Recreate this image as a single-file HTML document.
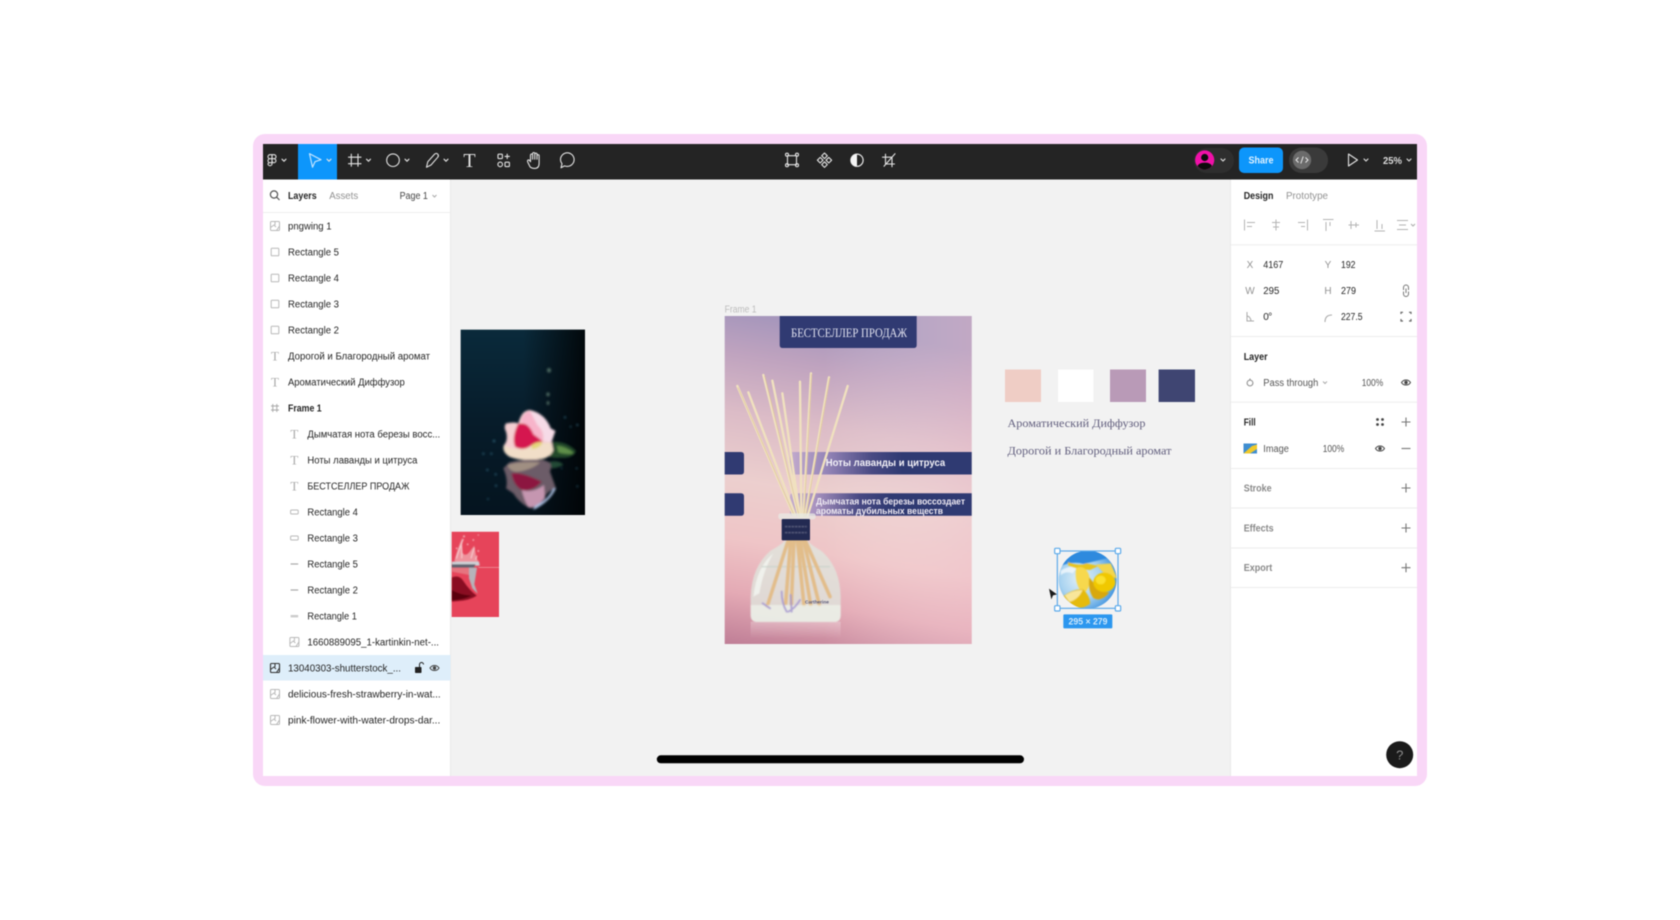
<!DOCTYPE html>
<html><head><meta charset="utf-8"><title>Figma</title>
<style>
html,body{margin:0;padding:0;background:#fff;width:1680px;height:920px;overflow:hidden}
svg{display:block;filter:blur(.55px)}
text{font-family:"Liberation Sans","Noto Sans CJK SC",sans-serif;font-size:10px;fill:#262626;white-space:pre}
.b{font-weight:bold}
text.g{fill:#929292}
.s{font-family:"Liberation Serif","Noto Serif CJK SC",serif}
.ic{fill:none;stroke:#b9b9b9;stroke-width:1}
.tb{fill:none;stroke:#e2e2e2;stroke-width:1.1;stroke-linejoin:round;stroke-linecap:round}
.li{fill:none;stroke:#aaa;stroke-width:1}
</style></head><body>
<svg xmlns="http://www.w3.org/2000/svg" width="1680" height="920" viewBox="0 0 1680 920">
<defs>
<filter id="bl3" x="-20%" y="-20%" width="140%" height="140%"><feGaussianBlur stdDeviation="3"/></filter>
<filter id="bl2" x="-20%" y="-20%" width="140%" height="140%"><feGaussianBlur stdDeviation="1.8"/></filter>
<linearGradient id="fg" x1=".12" y1="0" x2=".0" y2="1">
<stop offset="0" stop-color="#a797bc"/><stop offset=".12" stop-color="#bfa3bf"/><stop offset=".3" stop-color="#dcbcc7"/><stop offset=".5" stop-color="#eccfce"/><stop offset=".68" stop-color="#efc5c7"/><stop offset=".84" stop-color="#e4aab5"/><stop offset="1" stop-color="#bf7e96"/>
</linearGradient>
<linearGradient id="fr" x1="0" y1="0" x2="1" y2="0"><stop offset=".4" stop-color="#fff" stop-opacity="0"/><stop offset="1" stop-color="#f3c9d4" stop-opacity=".35"/></linearGradient>
<linearGradient id="b1" x1="0" y1="0" x2="1" y2="0"><stop offset="0" stop-color="#c3abcd"/><stop offset=".2" stop-color="#9585b8"/><stop offset=".45" stop-color="#494a83"/><stop offset=".62" stop-color="#2f3a72"/><stop offset="1" stop-color="#2f3a72"/></linearGradient>
<linearGradient id="b2" x1="0" y1="0" x2="1" y2="0"><stop offset="0" stop-color="#c3abcd"/><stop offset=".14" stop-color="#a892bf"/><stop offset=".38" stop-color="#484983"/><stop offset=".55" stop-color="#2f3a72"/><stop offset="1" stop-color="#2f3a72"/></linearGradient>
<linearGradient id="refl" x1="0" y1="0" x2="0" y2="1"><stop offset="0" stop-color="#fff" stop-opacity=".28"/><stop offset="1" stop-color="#fff" stop-opacity="0"/></linearGradient>
<linearGradient id="fb" x1="0" y1="0" x2="0" y2="1"><stop offset="0" stop-color="#0a2a3b"/><stop offset=".5" stop-color="#071c2a"/><stop offset="1" stop-color="#05141f"/></linearGradient>
<linearGradient id="fr2" x1="0" y1="0" x2="1" y2="0"><stop offset="0" stop-color="#000" stop-opacity="0"/><stop offset=".5" stop-color="#000" stop-opacity="0"/><stop offset="1" stop-color="#000" stop-opacity=".8"/></linearGradient>
<radialGradient id="lb" cx=".38" cy=".48" r=".7"><stop offset="0" stop-color="#e4f1f8"/><stop offset=".5" stop-color="#a9d3f0"/><stop offset="1" stop-color="#2a86dc"/></radialGradient>
<clipPath id="lc"><circle cx="143" cy="119" r="87"/></clipPath>
<clipPath id="sc"><rect x="20" y="20" width="142" height="256"/></clipPath>
<clipPath id="fc"><rect x="32" y="14" width="373" height="556"/></clipPath>
<g id="iimg"><rect x="-4.5" y="-4.5" width="9" height="9" rx="1" class="ic"/><path d="M-4.5 1.5 L-1 -1 L1 1 M0 -4.5 V-1 M4.5 0 L1.5 4.5" class="ic"/></g>
<g id="irect"><rect x="-3.8" y="-3.8" width="7.6" height="7.6" rx=".8" class="ic"/></g>
<g id="ibar"><rect x="-3.8" y="-2" width="7.6" height="4" rx="1" class="ic"/></g>
<g id="iline"><path d="M-3.8 0 H3.8" stroke="#aaa" stroke-width="1.2" fill="none"/></g>
<g id="ieye"><path d="M-4.5 0 C-2.5 -3.4 2.5 -3.4 4.5 0 C2.5 3.4 -2.5 3.4 -4.5 0Z" fill="none" stroke="#444" stroke-width="1"/><circle r="1.7" fill="#444"/></g>
<g id="iplus"><path d="M-4.5 0 H4.5 M0 -4.5 V4.5" stroke="#777" stroke-width="1.1" fill="none"/></g>
<g id="chev"><path d="M-2 -1 L0 1 L2 -1" fill="none" stroke="#e2e2e2" stroke-width="1.1" stroke-linecap="round"/></g>
</defs>

<!-- outer -->
<rect x="253" y="134" width="1174" height="652" rx="12" fill="#f9d7f7"/>
<rect x="263" y="144" width="1154" height="632" fill="#f2f2f2"/>

<!-- toolbar -->
<rect x="263" y="144" width="1154" height="35.5" fill="#242424"/>
<rect x="298" y="144" width="39" height="35.5" fill="#0d96fb"/>
<g transform="translate(0,-.8)">
<g class="tb" transform="translate(272.5,161)"><path d="M-.5 -5.5 H-2.5 A2 2 0 0 0 -2.5 -1.5 H-.5Z M-.5 -5.5 H1.5 A2 2 0 0 1 1.5 -1.5 H-.5 M-.5 -1.5 H-2.5 A2 2 0 0 0 -2.5 2.5 H-.5Z M-.5 2.5 V3.5 A2 2 0 0 1 -4.5 3.5 A2 2 0 0 1 -2.5 2.5 M-.5 -1.5 H1.4 A2 2 0 1 1 1.4 2.5 A2 2 0 0 1 -.5 .5"/></g>
<use href="#chev" x="284" y="161"/>
<path d="M309.5 154.5 L321 160.5 L315 162.5 L312.5 168 Z" fill="none" stroke="#bfe3ff" stroke-width="1.2" stroke-linejoin="round"/>
<use href="#chev" x="329" y="161"/>
<path class="tb" d="M351.3 155 V167 M358 155 V167 M348.5 158 H361 M348.5 164.5 H361"/>
<use href="#chev" x="368.5" y="161"/>
<circle class="tb" cx="393" cy="161" r="6.3"/>
<use href="#chev" x="407" y="161"/>
<path class="tb" d="M426.5 168 L427.8 162.5 L434.5 155 Q436.5 153.5 437.8 155 Q439 156.5 437.8 158 L431 165.8 Z"/>
<use href="#chev" x="446" y="161"/>
<text x="469.5" y="168" class="s" text-anchor="middle" style="font-size:20px;fill:#e2e2e2">T</text>
<g class="tb"><rect x="498" y="155" width="4.4" height="4.4" rx=".8"/><rect x="505" y="163" width="4.4" height="4.4" rx=".8"/><circle cx="500.2" cy="165.2" r="2.3"/><path d="M507.2 155 V159.4 M505 157.2 H509.4"/></g>
<path class="tb" d="M530 167.5 L527.8 163 Q527 161.2 528.3 160.7 Q529.6 160.7 530.5 162.5 V156 Q530.5 154.8 531.6 154.8 Q532.6 154.8 532.6 156 V160 V154.5 Q532.6 153.3 533.7 153.3 Q534.8 153.3 534.8 154.5 V160 V155 Q534.8 154 535.9 154 Q537 154 537 155 V160 V156.5 Q537 155.5 538 155.5 Q539.1 155.5 539.1 156.5 V164 Q539.1 169.2 534.6 169.2 Q531.6 169.2 530 167.5Z"/>
<path class="tb" d="M561 168.5 L562 164.5 Q560.5 162.5 560.5 160.5 A6.8 6.8 0 1 1 567.3 167.2 Q565.5 167.2 564.5 166.7 Z"/>
<g class="tb"><path d="M787.5 156.5 H796.5 M787.5 165.5 H796.5 M787.5 157 V165 M796.5 157 V165"/><circle cx="787" cy="155.5" r="1.5"/><circle cx="797" cy="155.5" r="1.5"/><circle cx="787" cy="166" r="1.5"/><circle cx="797" cy="166" r="1.5"/></g>
<g class="tb"><path d="M824.5 153.8 L827.3 156.6 L824.5 159.4 L821.7 156.6Z M824.5 162.6 L827.3 165.4 L824.5 168.2 L821.7 165.4Z M820.2 158.2 L823 161 L820.2 163.8 L817.4 161Z M828.8 158.2 L831.6 161 L828.8 163.8 L826 161Z"/></g>
<circle cx="857" cy="161" r="6.1" fill="none" stroke="#e8e8e8" stroke-width="1.2"/><path d="M857 154.9 A6.1 6.1 0 0 0 857 167.1Z" fill="#f4f4f4"/>
<path class="tb" d="M885.5 155 V164.8 H894.5 M882.5 158 H892 V167.5 M895 154.5 L884 167"/>
</g>

<!-- right toolbar -->
<rect x="1194" y="148" width="40" height="25" rx="12.5" fill="#2e2e2e"/>
<circle cx="1204.7" cy="160" r="9.6" fill="#f010a8"/>
<path d="M1197.5 166 Q1199 162.6 1204.7 162.6 Q1210.4 162.6 1212 166 Q1209 169.6 1204.7 169.6 Q1200.4 169.6 1197.5 166Z" fill="#0b0b0b"/><circle cx="1204.7" cy="157.5" r="3.6" fill="#0b0b0b"/>
<use href="#chev" x="1223" y="160"/>
<rect x="1239" y="147.5" width="44" height="25.5" rx="5" fill="#0d96fb"/>
<text x="1261" y="163.5" text-anchor="middle" class="b" style="fill:#dff1ff" textLength="25" lengthAdjust="spacingAndGlyphs">Share</text>
<rect x="1289" y="147.5" width="39" height="25.5" rx="12.5" fill="#3a3a3a"/>
<circle cx="1302" cy="160" r="9.2" fill="#6b6b6b"/>
<path d="M1298.5 157.5 L1296 160 L1298.5 162.5 M1305.5 157.5 L1308 160 L1305.5 162.5 M1303.2 156.5 L1300.8 163.5" fill="none" stroke="#e8e8e8" stroke-width="1"/>
<path class="tb" d="M1348.5 154 L1357.5 160 L1348.5 166 Z"/>
<use href="#chev" x="1366" y="160"/>
<text x="1383" y="164" class="b" style="fill:#dcdcdc" textLength="19" lengthAdjust="spacingAndGlyphs">25%</text>
<use href="#chev" x="1409" y="160"/>

<!-- left panel -->
<rect x="263" y="179.5" width="187.5" height="596.5" fill="#fff"/>
<rect x="450" y="179.5" width="1" height="596.5" fill="#e9e9e9"/>
<rect x="263" y="212" width="187.5" height="1" fill="#eeeeee"/>
<circle cx="274" cy="194.5" r="3.6" fill="none" stroke="#555" stroke-width="1.2"/><path d="M276.7 197.2 L279.5 200" stroke="#555" stroke-width="1.2"/>
<text x="288" y="199" class="b" textLength="28.7" lengthAdjust="spacingAndGlyphs">Layers</text>
<text x="329.2" y="199" class="g" textLength="29" lengthAdjust="spacingAndGlyphs">Assets</text>
<text x="399.6" y="199" style="fill:#444" textLength="28.3" lengthAdjust="spacingAndGlyphs">Page 1</text>
<path d="M432.5 195 L434.5 197 L436.5 195" fill="none" stroke="#aaa"/>

<rect x="263" y="655" width="187.5" height="25.5" fill="#deeefa"/>

<use href="#iimg" x="275" y="226"/><text x="288" y="229.3" textLength="43.6" lengthAdjust="spacingAndGlyphs">pngwing 1</text>
<use href="#irect" x="275" y="252"/><text x="288" y="255.3" textLength="51" lengthAdjust="spacingAndGlyphs">Rectangle 5</text>
<use href="#irect" x="275" y="278"/><text x="288" y="281.3" textLength="51" lengthAdjust="spacingAndGlyphs">Rectangle 4</text>
<use href="#irect" x="275" y="304"/><text x="288" y="307.3" textLength="51" lengthAdjust="spacingAndGlyphs">Rectangle 3</text>
<use href="#irect" x="275" y="330"/><text x="288" y="333.3" textLength="51" lengthAdjust="spacingAndGlyphs">Rectangle 2</text>
<text x="275" y="360.5" class="s" text-anchor="middle" style="font-size:13px;fill:#aaa">T</text><text x="288" y="359.3" textLength="142" lengthAdjust="spacingAndGlyphs">Дорогой и Благородный аромат</text>
<text x="275" y="386.5" class="s" text-anchor="middle" style="font-size:13px;fill:#aaa">T</text><text x="288" y="385.3" textLength="116.7" lengthAdjust="spacingAndGlyphs">Ароматический Диффузор</text>
<path class="li" d="M272.8 404 V412 M276.8 404 V412 M271 406 H279 M271 410 H279"/><text x="288" y="411.3" class="b" textLength="33.7" lengthAdjust="spacingAndGlyphs">Frame 1</text>

<text x="294.4" y="438.5" class="s" text-anchor="middle" style="font-size:13px;fill:#aaa">T</text><text x="307.4" y="437.3" textLength="132.8" lengthAdjust="spacingAndGlyphs">Дымчатая нота березы восс...</text>
<text x="294.4" y="464.5" class="s" text-anchor="middle" style="font-size:13px;fill:#aaa">T</text><text x="307.4" y="463.3" textLength="110" lengthAdjust="spacingAndGlyphs">Ноты лаванды и цитруса</text>
<text x="294.4" y="490.5" class="s" text-anchor="middle" style="font-size:13px;fill:#aaa">T</text><text x="307.4" y="489.3" textLength="102" lengthAdjust="spacingAndGlyphs">БЕСТСЕЛЛЕР ПРОДАЖ</text>
<use href="#ibar" x="294.4" y="512"/><text x="307.4" y="515.3" textLength="50.5" lengthAdjust="spacingAndGlyphs">Rectangle 4</text>
<use href="#ibar" x="294.4" y="538"/><text x="307.4" y="541.3" textLength="50.5" lengthAdjust="spacingAndGlyphs">Rectangle 3</text>
<use href="#iline" x="294.4" y="564"/><text x="307.4" y="567.3" textLength="50.5" lengthAdjust="spacingAndGlyphs">Rectangle 5</text>
<use href="#iline" x="294.4" y="590"/><text x="307.4" y="593.3" textLength="50.5" lengthAdjust="spacingAndGlyphs">Rectangle 2</text>
<rect x="290.6" y="615" width="7.6" height="2.4" fill="#ccc"/><text x="307.4" y="619.3" textLength="49.5" lengthAdjust="spacingAndGlyphs">Rectangle 1</text>
<use href="#iimg" x="294.4" y="642"/><text x="307.4" y="645.3" textLength="131.6" lengthAdjust="spacingAndGlyphs">1660889095_1-kartinkin-net-...</text>
<g transform="translate(275,668)"><rect x="-4.5" y="-4.5" width="9" height="9" rx="1" fill="none" stroke="#333" stroke-width="1.1"/><path d="M-4.5 1.5 L-1 -1 L1 1 M0 -4.5 V-1 M4.5 0 L1.5 4.5" fill="none" stroke="#333" stroke-width="1"/></g>
<text x="288" y="671.3" textLength="113" lengthAdjust="spacingAndGlyphs">13040303-shutterstock_...</text>
<rect x="415" y="667" width="6.5" height="6" rx=".7" fill="#222"/><path d="M419.5 667 V664.5 A2 2 0 0 1 423.5 664.5" fill="none" stroke="#222" stroke-width="1"/>
<use href="#ieye" x="434.5" y="668"/>
<use href="#iimg" x="275" y="694"/><text x="288" y="697.3" textLength="152.7" lengthAdjust="spacingAndGlyphs">delicious-fresh-strawberry-in-wat...</text>
<use href="#iimg" x="275" y="720"/><text x="288" y="723.3" textLength="152.3" lengthAdjust="spacingAndGlyphs">pink-flower-with-water-drops-dar...</text>

<!-- flower image: zoom coords origin 450,325 x3 -->
<g transform="translate(450,325) scale(.33333)">
<rect x="32" y="14" width="373" height="556" fill="url(#fb)"/>
<rect x="32" y="14" width="373" height="556" fill="url(#fr2)"/>
<g clip-path="url(#fc)">
<g filter="url(#bl3)">
<g fill="#3f7d96" opacity=".85"><circle cx="100" cy="386" r="3"/><circle cx="124" cy="386" r="3"/><circle cx="132" cy="348" r="3.5"/><circle cx="112" cy="435" r="3"/><circle cx="137" cy="448" r="3"/><circle cx="138" cy="482" r="3"/><circle cx="114" cy="522" r="2.5"/><circle cx="345" cy="277" r="3"/><circle cx="382" cy="300" r="3"/><circle cx="362" cy="305" r="2.5"/><circle cx="380" cy="430" r="2.5"/><circle cx="382" cy="484" r="2.5"/><circle cx="335" cy="430" r="2"/></g>
<g fill="#5f7f72" opacity=".8"><ellipse cx="297" cy="136" rx="6" ry="7"/><ellipse cx="294" cy="208" rx="5" ry="6"/><ellipse cx="294" cy="234" rx="4" ry="6"/></g>
<path d="M300 352 Q345 345 378 378 Q370 400 335 398 Q310 400 298 395Z" fill="#22482a"/>
<path d="M320 362 Q350 365 372 385 Q350 390 325 382Z" fill="#5f8f48"/>
<path d="M168 295 Q195 290 205 295 Q215 255 240 255 Q285 265 302 310 L316 318 L305 350 L310 375 Q300 400 270 402 Q215 410 178 395 Q155 380 162 360 Q175 345 168 320 Q160 305 168 295Z" fill="#f4cfd2"/>
<path d="M205 296 Q235 290 250 325 L278 350 Q260 350 245 360 Q220 380 195 365 Q185 335 205 296Z" fill="#d5164f"/>
<path d="M212 290 Q220 262 240 258 L262 300 Q282 320 278 348 L250 328 Q238 298 212 290Z" fill="#f7b4ca"/>
<path d="M240 258 Q285 265 302 310 L316 318 L305 350 Q290 352 280 345 Q285 320 262 300Z" fill="#f6dbe7"/>
<path d="M162 360 Q190 378 230 370 Q260 355 300 352 L310 375 Q300 400 270 402 Q215 410 178 395 Q155 380 162 360Z" fill="#f1dec8"/>
<path d="M245 360 Q262 348 278 352 Q270 370 245 372Z" fill="#e4d67a"/>
<path d="M178 412 Q215 402 275 404 Q302 410 305 420 L300 440 L318 490 Q290 498 280 525 Q255 556 235 548 Q205 530 190 505 L168 490 Q175 465 160 430 Z" fill="#6c5c68"/>
<path d="M172 420 Q205 408 270 412 Q250 432 205 440 Q180 442 172 420Z" fill="#a08f82"/>
<path d="M185 445 Q215 440 275 470 Q250 500 215 495 Q190 480 185 445Z" fill="#8c1240"/>
<path d="M255 540 Q290 530 310 490 L318 490 Q300 530 250 555Z" fill="#a9bee0"/>
<path d="M215 495 Q250 505 282 480 L285 520 Q255 550 235 546 Q222 525 215 495Z" fill="#c596b0"/>
<path d="M300 410 Q330 405 340 420 Q320 430 305 430Z" fill="#234a35"/>
</g></g>
</g>

<!-- strawberry image: origin 445,525 x3 -->
<g transform="translate(445,525) scale(.33333)" clip-path="url(#sc)">
<rect x="17" y="20" width="145" height="256" fill="#e6445a"/>
<rect x="100" y="126" width="62" height="2.5" fill="#ef8c96"/>
<g filter="url(#bl2)">
<path d="M28 108 Q38 70 52 38 L52 82 Q62 100 80 72 L88 62 L94 98 L102 112 H40Z" fill="#f0a8ae" opacity=".8"/>
<g stroke="#f9d8da" stroke-width="3" fill="none" opacity=".9"><path d="M34 100 Q42 72 55 42"/><path d="M50 100 Q52 80 48 60"/><path d="M78 100 Q82 84 88 68"/><path d="M92 104 L96 92"/></g>
<g fill="#f8cfd2" opacity=".85"><circle cx="57" cy="34" r="3"/><circle cx="85" cy="45" r="2.5"/><circle cx="100" cy="30" r="2"/><circle cx="35" cy="70" r="2.5"/><circle cx="100" cy="78" r="2.5"/><circle cx="68" cy="58" r="2.5"/></g>
<path d="M20 110 H102 L104 122 H20Z" fill="#cfd1d6"/>
<path d="M20 118 H92 L86 128 H20Z" fill="#5c606d"/>
<path d="M72 128 H96 L88 178 L98 206 L82 190 L72 160Z" fill="#b6b3ba"/>
<path d="M20 128 H72 L72 150 L20 140Z" fill="#e5878f" opacity=".7"/>
<path d="M20 158 Q42 148 55 168 Q75 198 95 212 Q75 226 40 228 L20 230Z" fill="#8a0e22"/>
<path d="M20 195 Q45 210 80 212 Q55 224 20 226Z" fill="#5a0611"/>
</g>
</g>

<!-- frame -->
<text x="724.6" y="312.5" style="fill:#bdbdbd" textLength="32" lengthAdjust="spacingAndGlyphs">Frame 1</text>
<rect x="724.7" y="316" width="247" height="328" fill="url(#fg)"/>
<rect x="724.7" y="316" width="247" height="328" fill="url(#fr)"/>
<path d="M779.7 316 H916.7 V345 Q916.7 348 913.7 348 H782.7 Q779.7 348 779.7 345Z" fill="#303a72"/>
<text x="791" y="337" class="s" style="font-size:13px;fill:#dfe0ee" textLength="116" lengthAdjust="spacingAndGlyphs">БЕСТСЕЛЛЕР ПРОДАЖ</text>
<path d="M724.7 452 H741 Q744 452 744 455 V471.5 Q744 474.5 741 474.5 H724.7Z" fill="#303a72"/>
<path d="M724.7 493.3 H741 Q744 493.3 744 496.3 V512.8 Q744 515.8 741 515.8 H724.7Z" fill="#303a72"/>
<path d="M793 452 H971.7 V474.5 H793 Q790 474.5 790 471.5 V455 Q790 452 793 452Z" fill="url(#b1)"/>
<path d="M793 493.3 H971.7 V515.8 H793 Q790 515.8 790 512.8 V496.3 Q790 493.3 793 493.3Z" fill="url(#b2)"/>
<text x="825.7" y="466" class="b" style="font-size:10.5px;fill:#f3f1f7" textLength="119.5" lengthAdjust="spacingAndGlyphs">Ноты лаванды и цитруса</text>
<text x="816" y="504.3" class="b" style="font-size:9.5px;fill:#efeaf3" textLength="149" lengthAdjust="spacingAndGlyphs">Дымчатая нота березы воссоздает</text>
<text x="816" y="514" class="b" style="font-size:9.5px;fill:#efeaf3" textLength="127" lengthAdjust="spacingAndGlyphs">ароматы дубильных веществ</text>

<!-- diffuser: origin 720,310 x3 -->
<g transform="translate(720,310) scale(.33333)">
<rect x="92" y="935" width="270" height="50" fill="url(#refl)"/>
<g filter="url(#bl2)">
<path d="M195 690 Q188 702 152 722 Q95 770 92 860 L92 915 Q92 935 110 936 H345 Q362 935 362 915 L362 860 Q360 770 303 722 Q268 702 262 690Z" fill="#dfe7de" opacity=".78"/>
<path d="M100 860 Q110 770 160 730 Q130 780 118 850 Z" fill="#f4f8f4" opacity=".75"/>
<path d="M125 770 H330" stroke="#c4d0c8" stroke-width="4" opacity=".7"/>
<g stroke="#e2bd8a" stroke-width="11" stroke-linecap="round" fill="none">
<path d="M205 690 L142 888"/><path d="M212 690 L197 880"/><path d="M222 690 L214 885"/><path d="M232 690 L252 885"/><path d="M240 690 L272 885"/><path d="M250 690 L298 885"/><path d="M255 690 L330 860"/>
</g>
<path d="M92 885 L92 915 Q92 935 110 936 H345 Q362 935 362 915 L362 885Z" fill="#eef2ea" opacity=".72"/>
<g stroke="#a394cf" stroke-width="6" fill="none" stroke-linecap="round" opacity=".8"><path d="M185 845 Q185 880 200 905"/><path d="M212 855 L215 905"/><path d="M128 880 L150 895"/><path d="M240 870 Q225 895 205 905"/></g>
</g>
<g stroke="#f0e1bf" stroke-width="7" stroke-linecap="round" fill="none">
<path d="M52 228 L220 615"/><path d="M85 247 L226 615"/><path d="M130 195 L236 620"/><path d="M157 212 L240 620"/><path d="M187 250 L240 620"/><path d="M240 215 L244 620"/><path d="M273 190 L250 620"/><path d="M327 202 L255 620"/><path d="M383 228 L262 620"/>
</g>
<g stroke="#d8bc8b" stroke-width="2" fill="none" opacity=".75"><path d="M54 232 L222 615"/><path d="M134 197 L238 620"/><path d="M275 192 L252 620"/><path d="M329 204 L257 620"/></g>
<rect x="175" y="610" width="112" height="18" rx="7" fill="#e8e9e4" opacity=".75"/>
<rect x="185" y="627" width="85" height="64" rx="3" fill="#232a52"/>
<g stroke="#7f8098" stroke-width="3" stroke-dasharray="7 3" filter="url(#bl2)"><path d="M195 650 H260"/><path d="M195 668 H260"/></g>
<text x="255" y="880" style="font-size:15px;fill:#59597a" class="b" textLength="72" lengthAdjust="spacingAndGlyphs">Cartherine</text>
</g>

<!-- swatches -->
<rect x="1005" y="369.5" width="36" height="32.5" fill="#efcdc5"/>
<rect x="1058" y="369.5" width="35.5" height="32.5" fill="#fff"/>
<rect x="1110" y="369.5" width="36" height="32.5" fill="#b99ab7"/>
<rect x="1158.6" y="369.5" width="36.4" height="32.5" fill="#3f4572"/>
<text x="1007.5" y="427" class="s" style="font-size:12px;fill:#63607f" textLength="138" lengthAdjust="spacingAndGlyphs">Ароматический Диффузор</text>
<text x="1007.5" y="454.5" class="s" style="font-size:12px;fill:#63607f" textLength="164" lengthAdjust="spacingAndGlyphs">Дорогой и Благородный аромат</text>

<!-- lemon: origin 1040,540 x3 -->
<g transform="translate(1040,540) scale(.33333)">
<circle cx="143" cy="119" r="87" fill="url(#lb)"/>
<g clip-path="url(#lc)"><g filter="url(#bl2)">
<path d="M55 80 Q100 62 130 72 L230 48 V25 H50Z" fill="#2d8ade"/>
<path d="M62 92 Q90 75 112 82 L98 100 Q78 92 62 106Z" fill="#f4f9fc" opacity=".8"/>
<path d="M84 66 Q115 80 140 70 L175 78 L150 90 Q110 88 84 76Z" fill="#e8c41c"/>
<path d="M108 84 Q135 74 147 105 Q156 140 130 162 Q102 135 108 84Z" fill="#f7d84e"/>
<path d="M168 74 L212 70 L232 116 Q212 110 192 100Z" fill="#f3d64e"/>
<path d="M205 190 L232 150 V210 H170Z" fill="#b9dcf3"/>
<path d="M148 112 Q175 150 208 158 Q182 188 160 174 Q143 150 148 112Z" fill="#d8a80c"/>
<ellipse cx="193" cy="127" rx="33" ry="29" fill="#f0c805"/>
<ellipse cx="182" cy="120" rx="15" ry="13" fill="#fbe12f"/>
<path d="M70 168 Q100 146 130 148 Q152 170 150 192 Q120 212 95 202 Q74 190 70 168Z" fill="#e5bb10"/>
<path d="M74 166 Q100 150 128 150 Q116 178 88 186Z" fill="#f8e69a"/>
</g></g>
<rect x="52" y="33" width="182" height="172" fill="none" stroke="#5aa9ea" stroke-width="3.5"/>
<g fill="#fff" stroke="#5aa9ea" stroke-width="3.5"><rect x="44" y="25" width="16" height="16" rx="3"/><rect x="226" y="25" width="16" height="16" rx="3"/><rect x="44" y="197" width="16" height="16" rx="3"/><rect x="226" y="197" width="16" height="16" rx="3"/></g>
<path d="M27 146 L51 163 L39 166 L34 178 Z" fill="#1a1a1a"/>
<rect x="70" y="223" width="147" height="42" rx="3" fill="#2c97ef"/>
</g>
<text x="1088" y="624.5" text-anchor="middle" class="b" style="fill:#cfe8fb;font-size:9.5px" textLength="39" lengthAdjust="spacingAndGlyphs">295 × 279</text>

<!-- home bar -->
<rect x="656.8" y="755.3" width="367.2" height="8" rx="4" fill="#000"/>

<!-- right panel -->
<rect x="1231" y="179.5" width="186" height="596.5" fill="#fff"/>
<rect x="1230" y="179.5" width="1" height="596.5" fill="#e9e9e9"/>
<text x="1243.7" y="199" class="b" textLength="29.7" lengthAdjust="spacingAndGlyphs">Design</text>
<text x="1286" y="199" class="g" textLength="42" lengthAdjust="spacingAndGlyphs">Prototype</text>
<g fill="none" stroke="#b4b4b4" stroke-width="1">
<path d="M1244.5 219.5 V230.5 M1247 222.5 H1255 M1247 226.5 H1252"/>
<path d="M1276 219.5 V230.5 M1272 222.5 H1280 M1273 227 H1279"/>
<path d="M1307.5 219.5 V230.5 M1298 222.5 H1305 M1301 226.5 H1305"/>
<path d="M1323 219.5 H1333.5 M1326 222 V231 M1330 222 V226"/>
<path d="M1348.5 225 H1359 M1351 221 V229 M1356 222.5 V227.5"/>
<path d="M1374.5 231 H1385 M1377 220 V229 M1382 224 V229"/>
<path d="M1397 220.5 H1408 M1399 225 H1406 M1397 229.5 H1408"/>
</g>
<path d="M1411 224 L1413 226 L1415 224" fill="none" stroke="#aaa"/>
<rect x="1231" y="244.3" width="186" height="1" fill="#ededed"/>
<text x="1250" y="268.2" text-anchor="middle" class="g">X</text><text x="1328" y="268.2" text-anchor="middle" class="g">Y</text><text x="1250" y="294.2" text-anchor="middle" class="g">W</text><text x="1328" y="294.2" text-anchor="middle" class="g">H</text>
<text x="1263.3" y="268.2" textLength="20" lengthAdjust="spacingAndGlyphs">4167</text><text x="1341" y="268.2" textLength="14.5" lengthAdjust="spacingAndGlyphs">192</text>
<text x="1263.3" y="294.2" textLength="16" lengthAdjust="spacingAndGlyphs">295</text><text x="1341" y="294.2" textLength="15" lengthAdjust="spacingAndGlyphs">279</text>
<text x="1263.3" y="320.2" textLength="9">0°</text><text x="1341" y="320.2" textLength="21.5" lengthAdjust="spacingAndGlyphs">227.5</text>
<path d="M1247 312 V321 H1254 M1247 316 Q1250.5 316.5 1251 321" fill="none" stroke="#aaa"/>
<path d="M1325 322 Q1325 315 1332 315" fill="none" stroke="#aaa" stroke-width="1.1"/>
<path d="M1403.5 290 V287.5 A2.5 2.5 0 0 1 1408.5 287.5 V290 M1403.5 291.5 V294 A2.5 2.5 0 0 0 1408.5 294 V291.5 M1406 288.5 V293" fill="none" stroke="#777"/>
<path d="M1401 314 V312.3 H1403 M1409 312.3 H1411 V314 M1411 319 V321 H1409 M1403 321 H1401 V319" fill="none" stroke="#666" stroke-width="1.2"/>
<rect x="1231" y="336" width="186" height="1" fill="#ededed"/>
<text x="1243.7" y="360" class="b" textLength="24" lengthAdjust="spacingAndGlyphs">Layer</text>
<circle cx="1250" cy="383" r="2.9" fill="none" stroke="#888"/><path d="M1250 378.5 V380" stroke="#888"/>
<text x="1263.3" y="385.8" style="fill:#555" textLength="55" lengthAdjust="spacingAndGlyphs">Pass through</text>
<path d="M1323 381.5 L1325 383.5 L1327 381.5" fill="none" stroke="#aaa"/>
<text x="1361.7" y="385.8" style="fill:#555" textLength="21.5" lengthAdjust="spacingAndGlyphs">100%</text>
<use href="#ieye" x="1406" y="382.5"/>
<rect x="1231" y="401.7" width="186" height="1" fill="#ededed"/>
<text x="1243.7" y="425.5" class="b" textLength="12" lengthAdjust="spacingAndGlyphs">Fill</text>
<g fill="#444"><circle cx="1377.5" cy="419.5" r="1.4"/><circle cx="1382.5" cy="419.5" r="1.4"/><circle cx="1377.5" cy="424.5" r="1.4"/><circle cx="1382.5" cy="424.5" r="1.4"/></g>
<use href="#iplus" x="1406" y="422"/>
<rect x="1243.5" y="443.5" width="13.5" height="10" fill="#3f8ed0"/><path d="M1243.5 453.5 L1252 446 L1257 444.5 V449 L1250 453.5Z" fill="#f0c92a"/>
<text x="1263.3" y="451.8" style="fill:#555" textLength="25.5" lengthAdjust="spacingAndGlyphs">Image</text>
<text x="1322.7" y="451.8" style="fill:#555" textLength="21.5" lengthAdjust="spacingAndGlyphs">100%</text>
<use href="#ieye" x="1380" y="448.5"/>
<path d="M1401.5 448.5 H1410.5" stroke="#777" stroke-width="1.1"/>
<rect x="1231" y="468" width="186" height="1" fill="#ededed"/>
<text x="1243.7" y="491.5" class="b" style="fill:#8a8a8a" textLength="28" lengthAdjust="spacingAndGlyphs">Stroke</text><use href="#iplus" x="1406" y="488"/>
<rect x="1231" y="507.5" width="186" height="1" fill="#ededed"/>
<text x="1243.7" y="531.5" class="b" style="fill:#8a8a8a" textLength="30" lengthAdjust="spacingAndGlyphs">Effects</text><use href="#iplus" x="1406" y="528"/>
<rect x="1231" y="547.5" width="186" height="1" fill="#ededed"/>
<text x="1243.7" y="571.2" class="b" style="fill:#8a8a8a" textLength="28.5" lengthAdjust="spacingAndGlyphs">Export</text><use href="#iplus" x="1406" y="567.7"/>
<rect x="1231" y="587" width="186" height="1" fill="#ededed"/>
<circle cx="1399.7" cy="754.7" r="13.5" fill="#1b1b1b"/>
<text x="1399.7" y="759.5" text-anchor="middle" style="font-size:13px;fill:#8e8e8e">?</text>
</svg>
</body></html>
